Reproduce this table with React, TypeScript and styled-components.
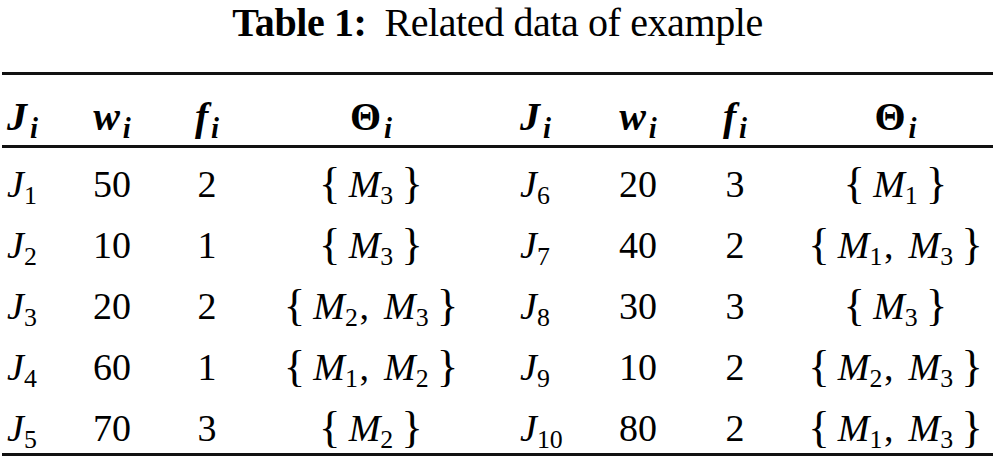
import React from 'react';
import styled, { createGlobalStyle } from 'styled-components';

const GlobalStyle = createGlobalStyle`
  html, body {
    margin: 0;
    padding: 0;
    background: #fff;
  }
  body {
    font-family: 'Liberation Serif', 'Times New Roman', serif;
    color: #000;
  }
`;

const Figure = styled.div`
  width: 995px;
  height: 457px;
  overflow: hidden;
`;

const Caption = styled.div`
  padding-top: 3px;
  font-size: 40px;
  line-height: 40px;
  letter-spacing: -0.4px;
  text-align: center;
  white-space: nowrap;
`;

const Label = styled.b`
  font-weight: 700;
  margin-right: 0.45em;
`;

const Table = styled.div`
  margin: 29px 2px 0;
  border-top: 3px solid #111;
  border-bottom: 3px solid #111;
`;

const Row = styled.div<{ $head?: boolean }>`
  display: grid;
  grid-template-columns: 60px 100px 90px 238px 100px 96px 98px 1fr;
  box-sizing: border-box;
  height: ${(p) => (p.$head ? 73 : 61)}px;
  padding-top: ${(p) => (p.$head ? 22 : 17)}px;
  font-size: ${(p) => (p.$head ? 40 : 38)}px;
  line-height: ${(p) => (p.$head ? 40 : 38)}px;
  border-bottom: ${(p) => (p.$head ? '3px solid #111' : 'none')};

  & > :nth-child(1) {
    text-align: left;
    padding-left: 5px;
  }
  & > :nth-child(5) {
    text-align: left;
    padding-left: 30px;
  }
  & > :nth-child(8) {
    padding-left: 14px;
  }
`;

const Cell = styled.div`
  text-align: center;
  white-space: nowrap;
`;

const Var = styled.span<{ $bold?: boolean }>`
  font-style: italic;
  font-weight: ${(p) => (p.$bold ? 700 : 400)};
`;

const Upright = styled.span<{ $bold?: boolean }>`
  font-style: normal;
  font-weight: ${(p) => (p.$bold ? 700 : 400)};
`;

const Sub = styled.span<{ $bold?: boolean; $italic?: boolean }>`
  position: relative;
  top: 0.27em;
  margin-left: ${(p) => (p.$italic ? '0.1em' : '0')};
  font-size: ${(p) => (p.$italic ? '0.72em' : '0.68em')};
  line-height: 0;
  font-style: ${(p) => (p.$italic ? 'italic' : 'normal')};
  font-weight: ${(p) => (p.$bold ? 700 : 400)};
`;

const Brace = styled.span`
  display: inline-block;
  margin: 0 0.18em;
  font-size: 1.18em;
  line-height: 0;
  position: relative;
  top: 0.02em;
`;

const Comma = styled.span`
  margin-left: 0.04em;
  margin-right: 0.4em;
`;

type Job = [number, number, number, number[]];

const jobs: Job[] = [
  [1, 50, 2, [3]],
  [2, 10, 1, [3]],
  [3, 20, 2, [2, 3]],
  [4, 60, 1, [1, 2]],
  [5, 70, 3, [2]],
  [6, 20, 3, [1]],
  [7, 40, 2, [1, 3]],
  [8, 30, 3, [3]],
  [9, 10, 2, [2, 3]],
  [10, 80, 2, [1, 3]],
];

function MachineSet({ ids }: { ids: number[] }) {
  return (
    <>
      <Brace>{'{'}</Brace>
      {ids.map((m, i) => (
        <React.Fragment key={m}>
          {i > 0 && <Comma>,</Comma>}
          <Var>M</Var>
          <Sub>{m}</Sub>
        </React.Fragment>
      ))}
      <Brace>{'}'}</Brace>
    </>
  );
}

function HeadCells() {
  return (
    <>
      <Cell>
        <Var $bold>J</Var>
        <Sub $bold $italic>i</Sub>
      </Cell>
      <Cell>
        <Var $bold>w</Var>
        <Sub $bold $italic>i</Sub>
      </Cell>
      <Cell>
        <Var $bold>f</Var>
        <Sub $bold $italic>i</Sub>
      </Cell>
      <Cell>
        <Upright $bold>Θ</Upright>
        <Sub $bold $italic>i</Sub>
      </Cell>
    </>
  );
}

function JobCells({ job }: { job: Job }) {
  const [id, w, f, set] = job;
  return (
    <>
      <Cell>
        <Var>J</Var>
        <Sub>{id}</Sub>
      </Cell>
      <Cell>{w}</Cell>
      <Cell>{f}</Cell>
      <Cell>
        <MachineSet ids={set} />
      </Cell>
    </>
  );
}

export default function App() {
  return (
    <Figure>
      <GlobalStyle />
      <Caption>
        <Label>Table 1:</Label>Related data of example
      </Caption>
      <Table>
        <Row $head>
          <HeadCells />
          <HeadCells />
        </Row>
        {jobs.slice(0, 5).map((job, k) => (
          <Row key={job[0]}>
            <JobCells job={job} />
            <JobCells job={jobs[k + 5]} />
          </Row>
        ))}
      </Table>
    </Figure>
  );
}
